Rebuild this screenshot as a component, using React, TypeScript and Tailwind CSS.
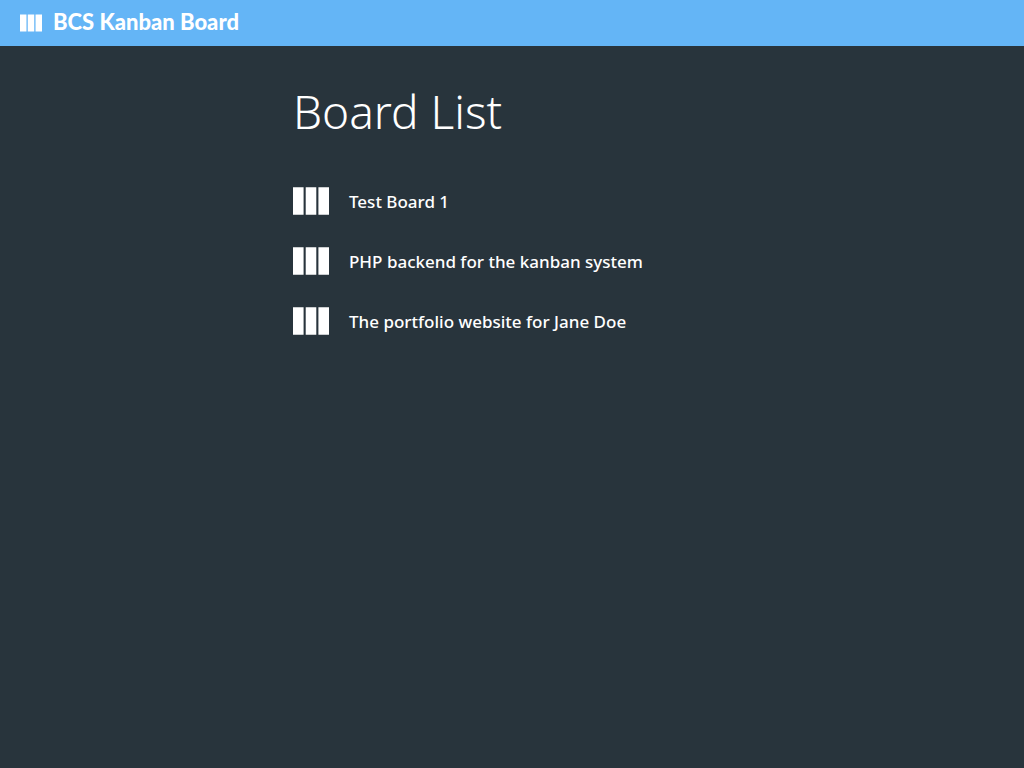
const boards = [
  'Test Board 1',
  'PHP backend for the kanban system',
  'The portfolio website for Jane Doe',
];

function ColumnsIcon({ className }: { className: string }) {
  return (
    <svg viewBox="4 5 17 13" fill="currentColor" aria-hidden="true" className={className}>
      <path d="M10 18h5V5h-5v13zm-6 0h5V5H4v13zM16 5v13h5V5h-5z" />
    </svg>
  );
}

export default function App() {
  return (
    <div className="min-h-screen bg-[#28343c] font-['Noto_Sans',sans-serif] text-white">
      <header className="flex h-[46px] items-center bg-[#64b5f6] px-5">
        <a href="#" className="flex items-center gap-[11px]">
          <ColumnsIcon className="h-[18px] w-[22px]" />
          <span className="pb-0.5 font-['Lato',sans-serif] text-[22px] leading-6 font-black">
            BCS Kanban Board
          </span>
        </a>
      </header>
      <main className="mx-auto w-full max-w-[438px] pt-[35px]">
        <h1 className="text-[46px] leading-[60px] font-light">Board List</h1>
        <ul className="mt-[30px]">
          {boards.map((name) => (
            <li key={name}>
              <a href="#" className="flex h-[60px] items-center gap-5">
                <ColumnsIcon className="h-7 w-9 shrink-0" />
                <span className="pt-0.5 text-[17px] leading-6 font-medium">{name}</span>
              </a>
            </li>
          ))}
        </ul>
      </main>
    </div>
  );
}
